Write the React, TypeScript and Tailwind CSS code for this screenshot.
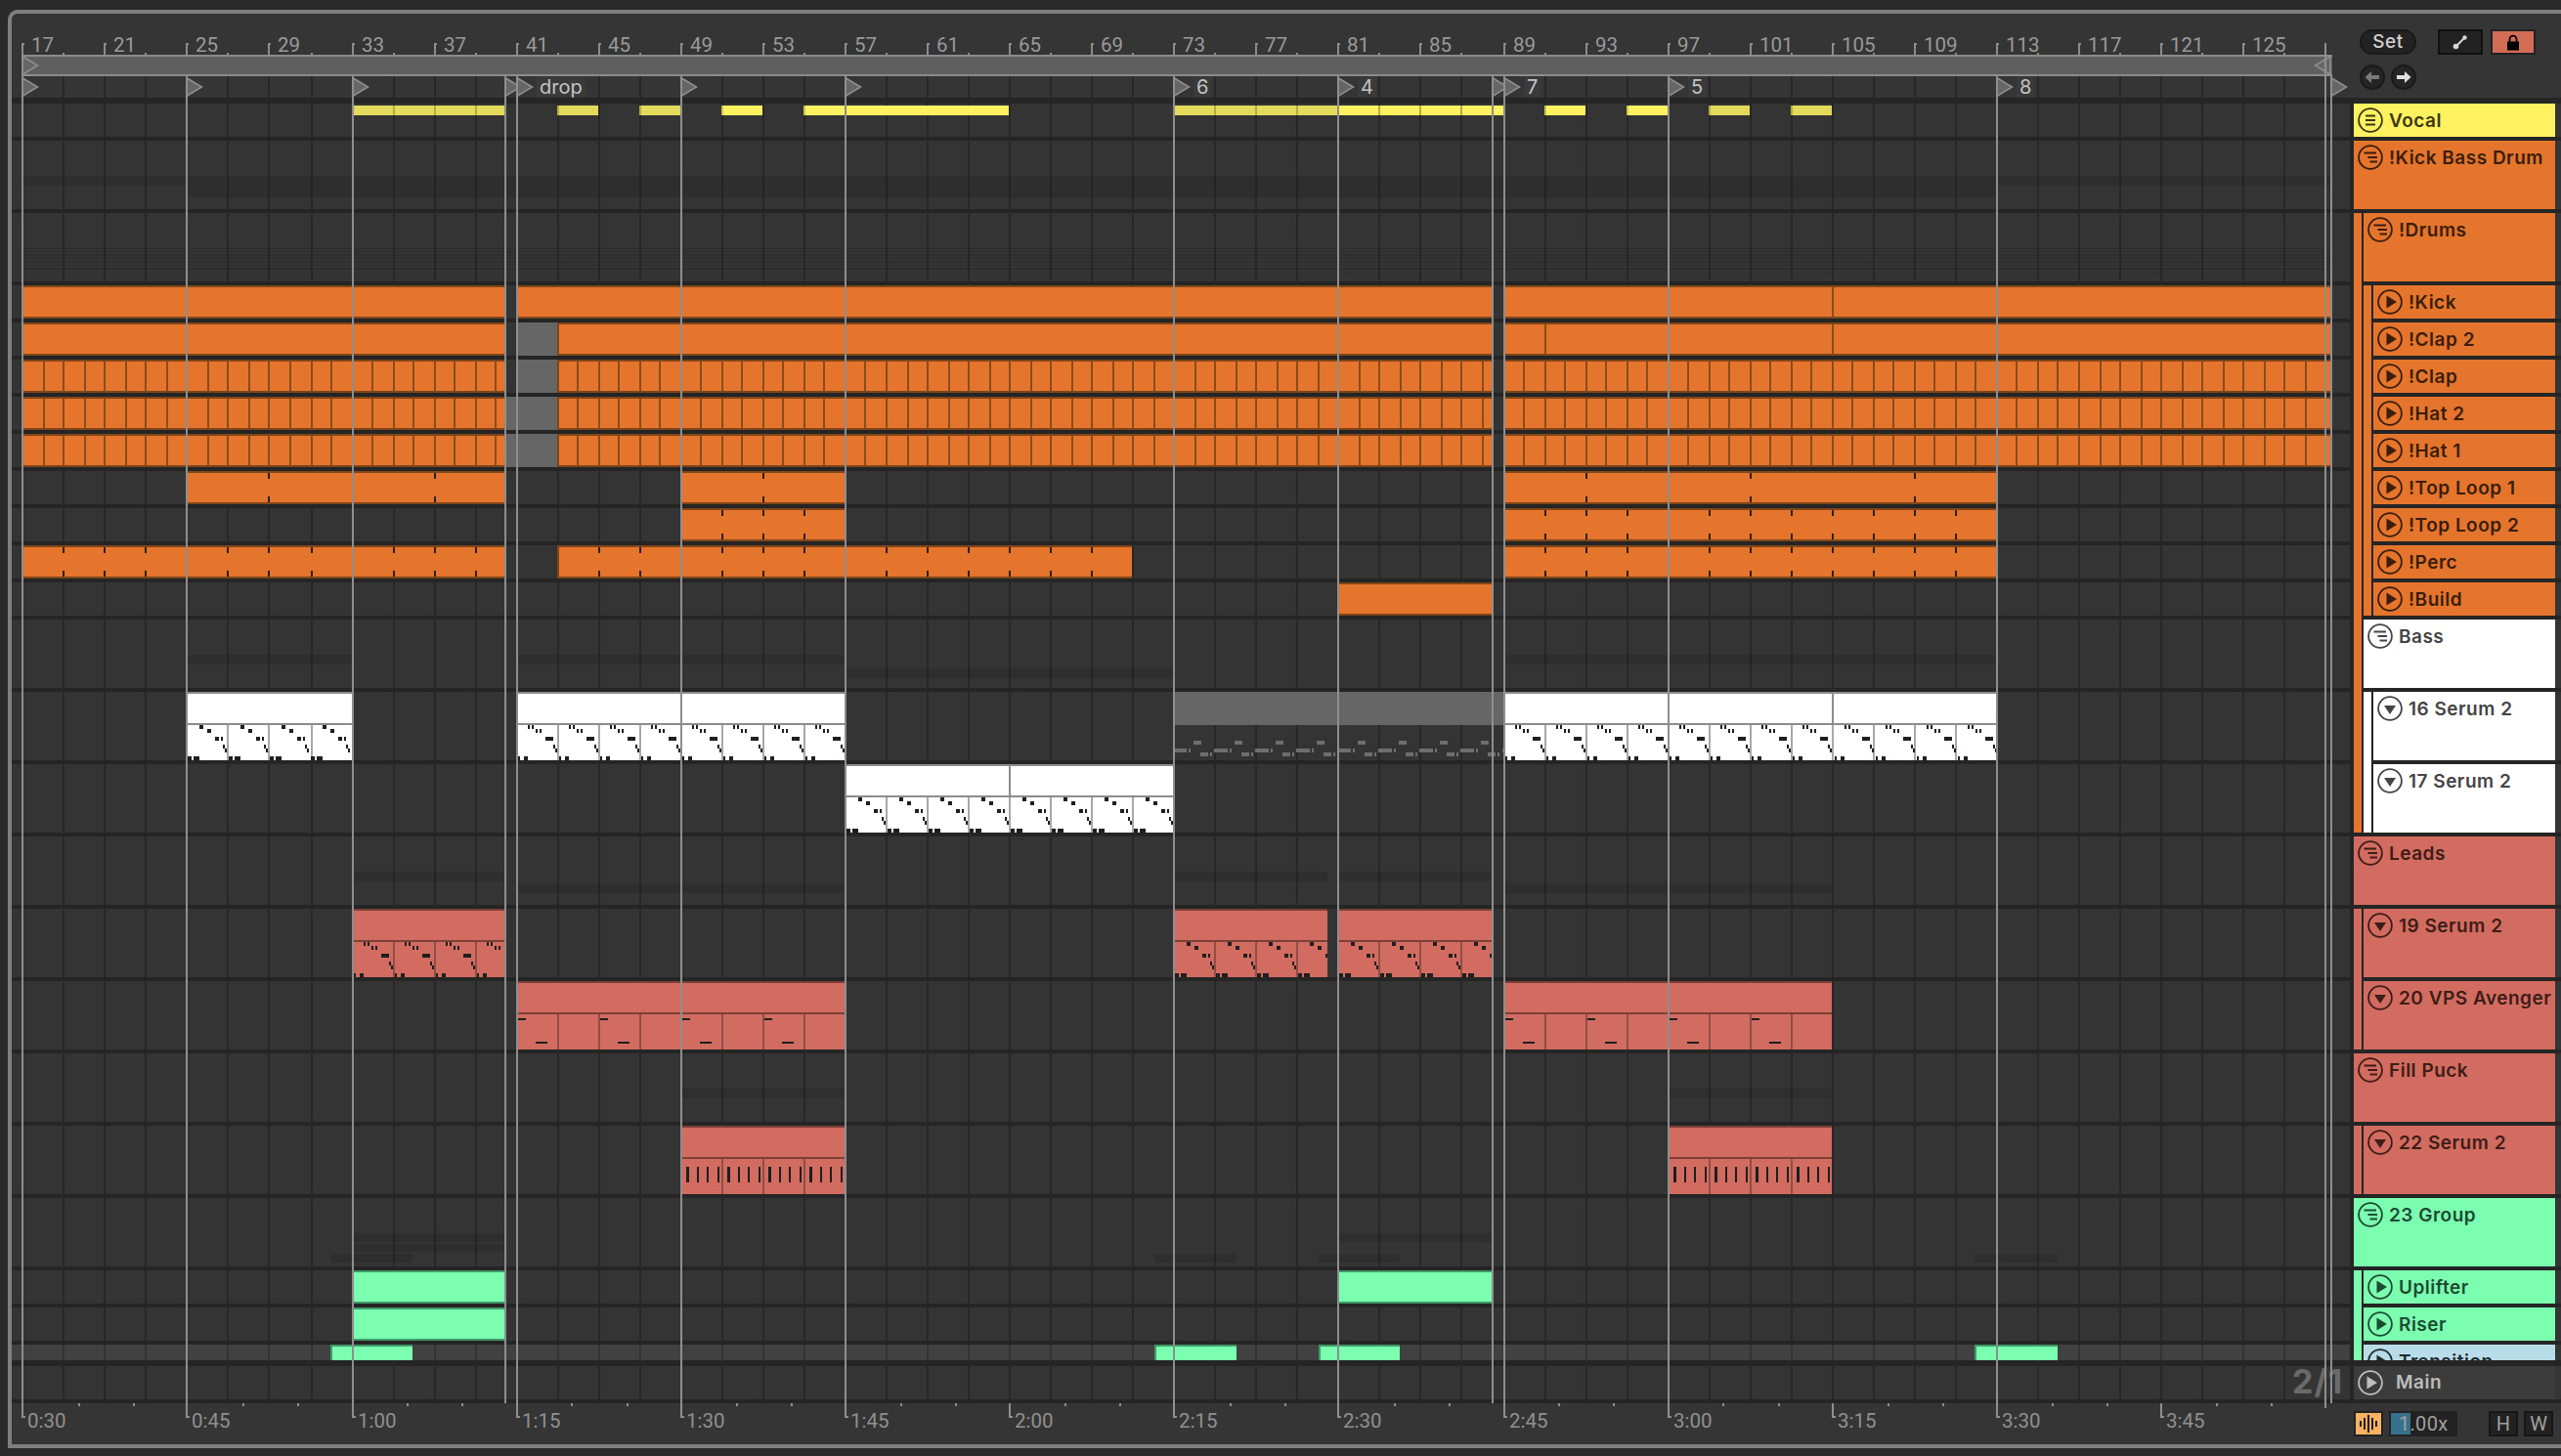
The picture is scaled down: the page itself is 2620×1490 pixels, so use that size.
import React from "react";

const X = (bar: number) => 2 * Math.floor((23.52 + (bar - 17) * 21.035) / 2);
const OX = 12;
const range = (a: number, b: number, s = 1) => {
  const r: number[] = [];
  for (let i = a; i <= b; i += s) r.push(i);
  return r;
};

type Kind = "orange" | "white" | "red" | "green" | "gray" | "yellow" | "dim" | "ghost";
type Clip = {
  x1: number;
  x2: number;
  k: Kind;
  div?: number[];
  cut?: number[];
  ticks?: number[];
  notes?: "midi" | "midi2" | "dash" | "comb" | "ghost";
};
type Stripe = [number, number, number, number];
type Row = { h: number; ch?: number; clips?: Clip[]; st?: Stripe[]; light?: boolean };

const COL: Record<string, { bg: string; edge: string; div: string }> = {
  orange: { bg: "#e5752d", edge: "#80461a", div: "#8b4c1c" },
  white: { bg: "#ffffff", edge: "#8c8c8c", div: "#a8a8a8" },
  red: { bg: "#d36c60", edge: "#7d4038", div: "#8f4f47" },
  green: { bg: "#7cfeb0", edge: "#3f9a68", div: "#3f9a68" },
  gray: { bg: "#666666", edge: "#666666", div: "#666666" },
  ghost: { bg: "transparent", edge: "transparent", div: "transparent" },
};

const bars2 = (a: number, b: number) => range(a, b, 2);
const every = (a: number, b: number) => range(a, b, 1);

const orange = (x1: number, x2: number, extra: Partial<Clip> = {}): Clip => ({ x1, x2, k: "orange", ...extra });
const fine = (barA: number, barB: number) => ({ div: every(barA, barB) });

const fineRow = (grayFrom: number): Row => ({
  h: 34,
  clips: [
    orange(22, 516, fine(18, 40)),
    { x1: grayFrom, x2: 570, k: "gray" },
    orange(570, 1526, fine(44, 88)),
    orange(1538, 2384, fine(90, 128)),
  ],
});

const midi = (
  x1: number,
  x2: number,
  k: Kind,
  a: number,
  b: number,
  notes: Clip["notes"] = "midi",
  cut: number[] = [],
): Clip => ({
  x1,
  x2,
  k,
  div: bars2(a, b),
  notes,
  cut,
});

const ROWS: Row[] = [
  {
    h: 34,
    clips: [
      { x1: 360, x2: 516, k: "dim", div: [35, 37, 39] },
      { x1: 570, x2: 612, k: "dim" },
      { x1: 654, x2: 696, k: "dim" },
      { x1: 738, x2: 780, k: "yellow" },
      { x1: 822, x2: 1032, k: "yellow" },
      { x1: 1200, x2: 1368, k: "dim", div: [75, 77, 79] },
      { x1: 1368, x2: 1538, k: "yellow", div: [83, 85, 87] },
      { x1: 1580, x2: 1622, k: "yellow" },
      { x1: 1664, x2: 1706, k: "yellow" },
      { x1: 1748, x2: 1790, k: "dim" },
      { x1: 1832, x2: 1874, k: "dim" },
    ],
  },
  { h: 70, st: [[22, 2384, 36, 10], [190, 2042, 46, 12]] },
  {
    h: 70,
    st: [
      [22, 2384, 36, 1],
      [22, 2384, 39, 1],
      [22, 2384, 42, 2],
      [22, 2384, 46, 1],
      [22, 2384, 49, 2],
      [22, 2384, 53, 1],
      [22, 2384, 56, 2],
      [22, 2384, 62, 1],
    ],
  },
  { h: 34, clips: [orange(22, 516), orange(528, 1526), orange(1538, 2384, { div: [105] })] },
  {
    h: 34,
    clips: [
      orange(22, 516),
      { x1: 528, x2: 570, k: "gray" },
      orange(570, 1526),
      orange(1538, 2384, { div: [91, 105] }),
    ],
  },
  fineRow(528),
  fineRow(516),
  fineRow(516),
  {
    h: 34,
    clips: [
      orange(190, 516, { ticks: [29, 37] }),
      orange(696, 864, { ticks: [53] }),
      orange(1538, 2042, { ticks: [93, 101, 109] }),
    ],
  },
  {
    h: 34,
    clips: [orange(696, 864, { ticks: [51, 53, 55] }), orange(1538, 2042, { ticks: bars2(91, 111) })],
  },
  {
    h: 34,
    clips: [
      orange(22, 516, { ticks: bars2(19, 39) }),
      orange(570, 1158, { ticks: bars2(45, 71) }),
      orange(1538, 2042, { ticks: bars2(91, 111) }),
    ],
  },
  { h: 34, clips: [orange(1368, 1526)] },
  { h: 70, st: [[190, 360, 36, 10], [528, 864, 36, 10], [1538, 2042, 36, 10], [864, 1200, 50, 10]] },
  {
    h: 70,
    clips: [
      midi(190, 360, "white", 27, 31),
      midi(528, 864, "white", 43, 55, "midi2", [49]),
      { x1: 1200, x2: 1538, k: "ghost", notes: "ghost" },
      midi(1538, 2042, "white", 91, 111, "midi2", [97, 105]),
    ],
  },
  { h: 70, clips: [midi(864, 1200, "white", 59, 71, "midi", [65])] },
  {
    h: 70,
    st: [[360, 516, 36, 10], [1200, 1358, 36, 10], [1370, 1526, 36, 10], [528, 864, 48, 10], [1538, 1874, 48, 10]],
  },
  {
    h: 70,
    clips: [
      midi(360, 516, "red", 35, 39, "midi2"),
      midi(1200, 1358, "red", 75, 79),
      midi(1368, 1526, "red", 83, 87),
    ],
  },
  { h: 70, clips: [midi(528, 864, "red", 43, 55, "dash", [49]), midi(1538, 1874, "red", 91, 103, "dash", [97])] },
  { h: 70, st: [[696, 864, 36, 10], [1706, 1874, 36, 10]] },
  { h: 70, clips: [midi(696, 864, "red", 51, 55, "comb"), midi(1706, 1874, "red", 99, 103, "comb")] },
  {
    h: 70,
    st: [
      [360, 516, 36, 9],
      [1368, 1526, 36, 9],
      [360, 516, 47, 8],
      [338, 422, 57, 9],
      [1181, 1265, 57, 9],
      [1349, 1432, 57, 9],
      [2020, 2105, 57, 9],
    ],
  },
  { h: 34, clips: [{ x1: 360, x2: 516, k: "green" }, { x1: 1368, x2: 1526, k: "green" }] },
  { h: 34, clips: [{ x1: 360, x2: 516, k: "green" }] },
  {
    h: 16,
    ch: 34,
    light: true,
    clips: [
      { x1: 338, x2: 422, k: "green" },
      { x1: 1181, x2: 1265, k: "green" },
      { x1: 1349, x2: 1432, k: "green" },
      { x1: 2020, x2: 2105, k: "green" },
    ],
  },
];

const GRID = bars2(17, 127).map(X);

function Notes({ clip, top, fill }: { clip: Clip; top: number; fill: string }) {
  const w = clip.x2 - clip.x1;
  const rects: React.ReactElement[] = [];
  let key = 0;
  const add = (x: number, y: number, rw: number, rh: number, c = fill) => {
    if (x >= w || x < 0) return;
    rects.push(<rect key={key++} x={x} y={y} width={Math.min(rw, w - x)} height={rh} fill={c} />);
  };
  if (clip.notes === "midi" || clip.notes === "midi2") {
    for (let s = 2; s < w; s += 42.07) {
      const b = Math.round(s);
      const split = clip.notes === "midi2";
      if (split) {
        add(b + 10, 0, 2, 4);
        add(b + 14, 0, 2, 4);
        add(b + 18, 4, 2, 4);
        add(b + 22, 4, 2, 4);
      } else {
        add(b + 12, 0, 4, 4);
        add(b + 20, 4, 4, 4);
      }
      add(b + 28, 12, 4, 4);
      add(b + (split ? 32 : 34), 12, split ? 4 : 2, 4);
      add(b + 36, 20, 2, 4);
      add(b + 38, 24, 2, 4);
      if (split) {
        add(b, 32, 2, 4);
        add(b + 6, 32, 4, 4);
      } else {
        add(b, 32, 4, 4);
        add(b + 6, 32, 6, 4);
      }
    }
  } else if (clip.notes === "dash") {
    for (let s = 0; s < w; s += 84.14) {
      const b = Math.round(s);
      add(b + 2, 4, 8, 2);
      add(b + 20, 28, 12, 2);
    }
  } else if (clip.notes === "comb") {
    for (let i = 0; i < 16; i++) {
      const x = 6 + Math.round(i * 10.52);
      add(x, 8, i % 4 === 0 ? 3 : 2, 16);
    }
  } else if (clip.notes === "ghost") {
    const c = "#6e6e6e";
    for (let s = 0; s < w; s += 42.07) {
      const b = Math.round(s);
      add(b + 21, 16, 8, 4, c);
      add(b + 0, 24, 14, 4, c);
      add(b + 16, 24, 2, 4, c);
      add(b + 28, 28, 8, 4, c);
      add(b + 38, 28, 2, 4, c);
    }
  }
  return (
    <svg className="absolute left-0" style={{ top }} width={w} height={36} shapeRendering="crispEdges">
      {rects}
    </svg>
  );
}

function ClipView({ c, h }: { c: Clip; h: number }) {
  const left = c.x1 - OX;
  const width = c.x2 - c.x1;
  if (c.k === "yellow" || c.k === "dim") {
    return (
      <div
        className={`absolute top-[2px] h-[10px] border-l-2 ${c.k === "yellow" ? "border-[#cfc44f] bg-[#fff261]" : "border-[#b5ac46] bg-[#e3d95a]"}`}
        style={{ left, width }}
      >
        {(c.div ?? []).map((b) => (
          <div key={b} className="absolute top-0 h-full w-[2px] bg-[#b5ac46]" style={{ left: X(b) - c.x1 - 2 }} />
        ))}
      </div>
    );
  }
  const col = COL[c.k];
  const isMidi = !!c.notes;
  if (c.k === "ghost") {
    return (
      <div className="absolute top-0" style={{ left, width, height: h }}>
        <div className="h-[34px] bg-[#666666]" />
        <Notes clip={c} top={34} fill="#6e6e6e" />
      </div>
    );
  }
  return (
    <div className="absolute top-0 overflow-hidden" style={{ left, width, height: h, backgroundColor: col.bg }}>
      {c.k !== "gray" && <div className="absolute left-0 top-0 h-full w-[2px]" style={{ backgroundColor: col.edge }} />}
      {c.k !== "gray" && <div className="absolute left-0 top-0 h-[2px] w-full" style={{ backgroundColor: col.edge }} />}
      {c.k !== "gray" && !isMidi && (
        <div className="absolute bottom-0 left-0 h-[2px] w-full" style={{ backgroundColor: col.edge }} />
      )}
      {isMidi && <div className="absolute left-0 top-[32px] h-[2px] w-full" style={{ backgroundColor: col.edge }} />}
      {(c.cut ?? []).map((b) => (
        <div key={b} className="absolute bottom-0 top-0 w-[2px]" style={{ left: X(b) - c.x1, backgroundColor: col.edge }} />
      ))}
      {(c.div ?? []).map((b) => (
        <div
          key={b}
          className={`absolute w-[2px] ${isMidi ? "bottom-0 top-[34px]" : "bottom-[2px] top-[2px]"}`}
          style={{ left: X(b) - c.x1, backgroundColor: col.div }}
        />
      ))}
      {(c.ticks ?? []).map((b) => (
        <React.Fragment key={b}>
          <div className="absolute top-[2px] h-[6px] w-[2px] bg-[#2a2218]" style={{ left: X(b) - c.x1 }} />
          <div className="absolute bottom-[2px] h-[6px] w-[2px] bg-[#2a2218]" style={{ left: X(b) - c.x1 }} />
        </React.Fragment>
      ))}
      {isMidi && <Notes clip={c} top={34} fill="#1f1f1f" />}
    </div>
  );
}

function TrackRow({ r }: { r: Row }) {
  return (
    <div
      className={`relative shrink-0 overflow-hidden ${r.light ? "bg-[#414141]" : "bg-[#343434]"}`}
      style={{ height: r.h }}
    >
      {GRID.map((x) => (
        <div
          key={x}
          className={`absolute top-0 h-full w-[2px] ${r.light ? "bg-[#333333]" : "bg-[#272727]"}`}
          style={{ left: x - OX }}
        />
      ))}
      {(r.st ?? []).map((s, i) => (
        <div
          key={i}
          className="absolute bg-black/10"
          style={{ left: s[0] - OX, width: s[1] - s[0], top: s[2], height: s[3] }}
        />
      ))}
      {(r.clips ?? []).map((c, i) => (
        <ClipView key={i} c={c} h={r.ch ?? r.h} />
      ))}
    </div>
  );
}

type IconT = "vocal" | "group" | "play" | "down";
function TrackIcon({ t, color }: { t: IconT; color: string }) {
  return (
    <svg width="26" height="26" viewBox="0 0 26 26" className="shrink-0">
      <circle cx="13" cy="13" r="11.9" fill="none" stroke={color} strokeWidth="1.8" />
      {t === "vocal" && (
        <g stroke={color} strokeWidth="2">
          <path d="M8 8.5H18M8 13H18M8 17.5H18" />
        </g>
      )}
      {t === "group" && (
        <g stroke={color} strokeWidth="2">
          <path d="M6.5 8.5H19M10.5 13H20M12.5 17.5H20" />
        </g>
      )}
      {t === "play" && <path d="M9.5 6.5L20 13L9.5 19.5Z" fill={color} />}
      {t === "down" && <path d="M7 10H19L13 19Z" fill={color} />}
    </svg>
  );
}

const THEME = {
  yellow: { bg: "bg-[#fff261]", text: "text-[#3a3610]", c: "#3a3610" },
  orange: { bg: "bg-[#e5752d]", text: "text-[#3a1d0a]", c: "#3a1d0a" },
  white: { bg: "bg-white", text: "text-[#444444]", c: "#444444" },
  red: { bg: "bg-[#d36c60]", text: "text-[#3e1c18]", c: "#3e1c18" },
  green: { bg: "bg-[#7cfeb0]", text: "text-[#1d4a33]", c: "#1d4a33" },
  blue: { bg: "bg-[#b9dde8]", text: "text-[#222a2e]", c: "#222a2e" },
};
type ThemeName = keyof typeof THEME;

function Track({ name, th, icon, h = 34 }: { name: string; th: ThemeName; icon: IconT; h?: number }) {
  const t = THEME[th];
  return (
    <div className={`${t.bg} ${t.text} shrink-0`} style={{ height: h }}>
      <div className="flex h-[34px] items-center gap-[6px] pl-[4px] font-[Inter,sans-serif] text-[19px] font-semibold leading-none tracking-[0.5px] whitespace-nowrap">
        <TrackIcon t={icon} color={t.c} />
        <span>{name}</span>
      </div>
    </div>
  );
}

function Group({ name, th, children }: { name: string; th: ThemeName; children: React.ReactNode }) {
  const t = THEME[th];
  return (
    <div className="flex shrink-0 flex-col gap-[4px]">
      <Track name={name} th={th} icon="group" h={70} />
      <div className={`flex ${t.bg}`}>
        <div className="w-[8px] shrink-0" />
        <div className="flex min-w-0 flex-1 flex-col gap-[4px] border-l-2 border-[#252525] bg-[#252525]">
          {children}
        </div>
      </div>
    </div>
  );
}

const LOCATORS: [number, number, number][] = [
  [22, 58, 1436],
  [190, 78, 1436],
  [360, 78, 1436],
  [516, 78, 1436],
  [528, 78, 1436],
  [696, 78, 1436],
  [864, 78, 1436],
  [1200, 78, 1436],
  [1368, 78, 1436],
  [1526, 78, 1436],
  [1538, 78, 1436],
  [1706, 78, 1436],
  [2042, 78, 1436],
  [2378, 44, 1441],
  [2384, 78, 1436],
];

const MARKERS: [number, string?][] = [
  [22],
  [190],
  [360],
  [516],
  [528, "drop"],
  [696],
  [864],
  [1200, "6"],
  [1368, "4"],
  [1526],
  [1538, "7"],
  [1706, "5"],
  [2042, "8"],
  [2384],
];

const TIMES = ["0:30", "0:45", "1:00", "1:15", "1:30", "1:45", "2:00", "2:15", "2:30", "2:45", "3:00", "3:15", "3:30", "3:45"];

function Flag({ x, dir = "r" }: { x: number; dir?: "r" | "l" }) {
  return (
    <svg
      className="absolute top-[1px]"
      style={{ left: dir === "r" ? x - OX : x - OX - 18 }}
      width="18"
      height="20"
      viewBox="0 0 18 20"
    >
      <path
        d={dir === "r" ? "M1 0.7L16.5 10L1 19.3Z" : "M17 0.7L1.5 10L17 19.3Z"}
        fill="#666666"
        stroke="#8e8e8e"
        strokeWidth="1.6"
      />
    </svg>
  );
}

function Header() {
  return (
    <div className="flex h-[86px] shrink-0">
      <div className="flex w-[2392px] shrink-0 flex-col">
        <div className="relative h-[42px] shrink-0 font-[Roboto,sans-serif] text-[20.5px] leading-[20px] text-[#9a9a9a]">
          {range(17, 125, 4).map((b) => (
            <React.Fragment key={b}>
              <div className="absolute top-[30px] h-[12px] w-[2px] bg-[#8c8c8c]" style={{ left: X(b) - OX }} />
              <div className="absolute top-[30px] h-[2px] w-[3px] bg-[#8c8c8c]" style={{ left: X(b) - OX }} />
              <div className="absolute top-[40px] h-[2px] w-[2px] bg-[#8c8c8c]" style={{ left: X(b + 2) - OX }} />
              <span className="absolute top-[22px]" style={{ left: X(b) - OX + 10 }}>
                {b}
              </span>
            </React.Fragment>
          ))}
        </div>
        <div className="relative h-[22px] shrink-0">
          <div className="absolute inset-y-0 left-[10px] w-[2364px] border-y-2 border-[#8c8c8c] bg-[#5f5f5f]" />
          <Flag x={22} />
          <Flag x={2385} dir="l" />
        </div>
        <div className="relative h-[22px] shrink-0 font-[Inter,sans-serif] text-[20px] leading-[20px] text-[#c4c4c4]">
          {GRID.map((x) => (
            <div key={x} className="absolute top-0 h-full w-[2px] bg-[#272727]" style={{ left: x - OX }} />
          ))}
          {MARKERS.map(([x, label]) =>
            label ? (
              <span key={x} className="absolute top-[1px] bg-[#3a3a3a] px-[3px]" style={{ left: x - OX + 21 }}>
                {label}
              </span>
            ) : null,
          )}
          {MARKERS.map(([x]) => (
            <Flag key={x} x={x} />
          ))}
        </div>
      </div>
      <div className="flex flex-1 flex-col gap-[10px] pl-[10px] pt-[16px]">
        <div className="flex items-start">
          <div className="flex h-[26px] w-[58px] items-center justify-center rounded-full border-2 border-[#1a1a1a] bg-[#222222] font-[Inter,sans-serif] text-[19px] font-medium tracking-[0.5px] text-[#d0d0d0]">
            Set
          </div>
          <div className="ml-[22px] flex h-[26px] w-[46px] items-center justify-center border-2 border-[#111111] bg-[#222222]">
            <svg width="16" height="16" viewBox="0 0 16 16">
              <path d="M3.5 12.5L12.5 3.5" stroke="#d8d8d8" strokeWidth="2" />
              <circle cx="3.5" cy="12.5" r="2.8" fill="#d8d8d8" />
              <circle cx="12.5" cy="3.5" r="2.2" fill="#d8d8d8" />
            </svg>
          </div>
          <div className="ml-[8px] flex h-[26px] w-[46px] items-center justify-center border-2 border-[#222222] bg-[#d36c54]">
            <svg width="16" height="17" viewBox="0 0 16 17">
              <path d="M4.5 8V5.2a3.5 3.5 0 0 1 7 0V8" fill="none" stroke="#000" strokeWidth="1.8" />
              <rect x="2" y="7.5" width="12" height="9" fill="#000" />
            </svg>
          </div>
        </div>
        <div className="flex gap-[6px]">
          <div className="flex h-[26px] w-[26px] items-center justify-center rounded-full border-2 border-[#1a1a1a] bg-[#252525]">
            <svg width="16" height="14" viewBox="0 0 16 14">
              <path d="M0.5 7L7 1V5H15V9H7V13Z" fill="#7a7a7a" />
            </svg>
          </div>
          <div className="flex h-[26px] w-[26px] items-center justify-center rounded-full border-2 border-[#1a1a1a] bg-[#252525]">
            <svg width="16" height="14" viewBox="0 0 16 14">
              <path d="M15.5 7L9 1V5H1V9H9V13Z" fill="#e0e0e0" />
            </svg>
          </div>
        </div>
      </div>
    </div>
  );
}

function Footer() {
  const small: number[] = [];
  for (let i = 0; i <= 41; i++) if (i % 3 !== 0) small.push(Math.round(23.52 + (i * 8 * 21.035) / 3));
  return (
    <div className="flex h-[42px] shrink-0">
      <div className="relative w-[2392px] shrink-0 font-[Roboto,sans-serif] text-[20.5px] leading-[20px] text-[#909090]">
        {small.map((x) => (
          <div key={x} className="absolute top-0 h-[3px] w-[2px] bg-[#8e8e8e]" style={{ left: x - OX }} />
        ))}
        {TIMES.map((t, i) => {
          const x = X(17 + i * 8);
          return (
            <React.Fragment key={t}>
              <div className="absolute top-0 h-[15px] w-[2px] bg-[#8e8e8e]" style={{ left: x - OX }} />
              <div className="absolute top-[13px] h-[2px] w-[4px] bg-[#8e8e8e]" style={{ left: x - OX }} />
              <span className="absolute top-[8px]" style={{ left: x - OX + 6 }}>
                {t}
              </span>
            </React.Fragment>
          );
        })}
      </div>
      <div className="flex flex-1 items-start pl-[4px] pt-[8px] font-[Roboto,sans-serif] text-[20px] leading-none text-[#a0a0a0]">
        <div className="flex h-[26px] w-[30px] items-center justify-center border-2 border-[#222222] bg-[#f5b261]">
          <svg width="20" height="18" viewBox="0 0 20 18" shapeRendering="crispEdges">
            <g fill="#2a1c0c">
              <rect x="1" y="6" width="2" height="6" />
              <rect x="5" y="3" width="2" height="12" />
              <rect x="9" y="0" width="2" height="18" />
              <rect x="13" y="3" width="2" height="12" />
              <rect x="17" y="6" width="2" height="6" />
            </g>
          </svg>
        </div>
        <div className="relative ml-[6px] flex h-[26px] w-[70px] items-center border-2 border-[#222222] bg-[#222222]">
          <div className="absolute inset-y-0 left-0 w-[20px] bg-[#37718c]" />
          <span className="relative pl-[8px] tracking-[0.3px]">1.00x</span>
        </div>
        <div className="ml-[32px] flex h-[26px] w-[30px] items-center justify-center border-2 border-[#161616] bg-[#222222]">
          H
        </div>
        <div className="ml-[6px] flex h-[26px] w-[30px] items-center justify-center border-2 border-[#161616] bg-[#222222]">
          W
        </div>
      </div>
    </div>
  );
}

function Panel() {
  return (
    <div className="flex h-[1286px] flex-col gap-[4px] overflow-hidden">
      <Track name="Vocal" th="yellow" icon="vocal" />
      <Group name="!Kick Bass Drum" th="orange">
        <Group name="!Drums" th="orange">
          {["!Kick", "!Clap 2", "!Clap", "!Hat 2", "!Hat 1", "!Top Loop 1", "!Top Loop 2", "!Perc", "!Build"].map((n) => (
            <Track key={n} name={n} th="orange" icon="play" />
          ))}
        </Group>
        <Group name="Bass" th="white">
          <Track name="16 Serum 2" th="white" icon="down" h={70} />
          <Track name="17 Serum 2" th="white" icon="down" h={70} />
        </Group>
      </Group>
      <Group name="Leads" th="red">
        <Track name="19 Serum 2" th="red" icon="down" h={70} />
        <Track name="20 VPS Avenger" th="red" icon="down" h={70} />
      </Group>
      <Group name="Fill Puck" th="red">
        <Track name="22 Serum 2" th="red" icon="down" h={70} />
      </Group>
      <Group name="23 Group" th="green">
        <Track name="Uplifter" th="green" icon="play" />
        <Track name="Riser" th="green" icon="play" />
        <Track name="Transition" th="blue" icon="play" />
      </Group>
    </div>
  );
}

export default function App() {
  return (
    <div className="h-[1490px] w-[2620px] overflow-hidden bg-[#2a2a2a] pl-[8px] pt-[10px]">
      <div className="relative flex h-[1472px] flex-col rounded-tl-[10px] border-y-4 border-l-4 border-[#7f7f7f] bg-[#353535]">
        <Header />
        <div className="flex h-[1336px] shrink-0 bg-[#252525]">
          <div className="flex w-[2392px] shrink-0 flex-col pt-[6px]">
            <div className="flex flex-col gap-[4px]">
              {ROWS.map((r, i) => (
                <TrackRow key={i} r={r} />
              ))}
            </div>
            <div className="relative mt-[6px]">
              <TrackRow r={{ h: 34 }} />
              <span className="absolute left-[2333px] top-[-2px] font-[Inter,sans-serif] text-[34px] font-bold leading-[36px] tracking-[1px] text-[#6a6a6a]">
                2/1
              </span>
            </div>
          </div>
          <div className="ml-[4px] flex w-[206px] shrink-0 flex-col pt-[6px]">
            <Panel />
            <div className="mt-[6px] flex h-[34px] shrink-0 items-center gap-[13px] bg-[#3c3c3c] pl-[4px] font-[Inter,sans-serif] text-[19px] font-semibold tracking-[0.5px] text-[#bdbdbd]">
              <TrackIcon t="play" color="#bdbdbd" />
              <span>Main</span>
            </div>
          </div>
          <div className="flex flex-1 flex-col gap-[4px] pt-[6px]">
            {ROWS.map((r, i) => (
              <div key={i} className="bg-[#353535]" style={{ height: r.h }} />
            ))}
            <div className="mt-[2px] h-[34px] bg-[#353535]" />
          </div>
        </div>
        <Footer />
        {LOCATORS.map(([x, y1, y2]) => (
          <div
            key={x}
            className="absolute w-[2px] bg-[#8e8e8e]"
            style={{ left: x - OX, top: y1 - 14, height: y2 - y1 }}
          />
        ))}
      </div>
    </div>
  );
}
